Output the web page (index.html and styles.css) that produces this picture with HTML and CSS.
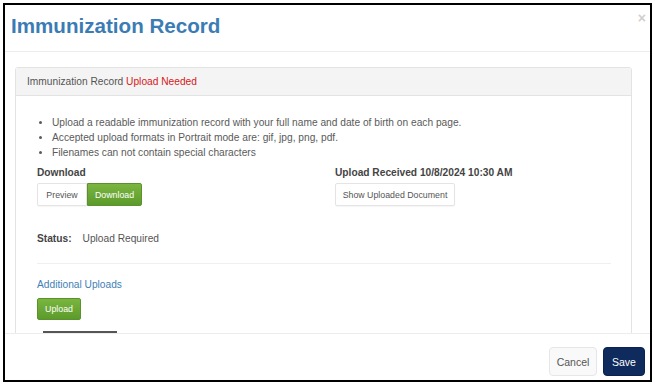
FILE: index.html
```html
<!DOCTYPE html>
<html>
<head>
<meta charset="utf-8">
<link rel="stylesheet" href="styles.css">
</head>
<body>
<div class="modal">
  <div class="modal-header">
    <h1 class="modal-title">Immunization Record</h1>
    <span class="close">&times;</span>
  </div>
  <div class="modal-body">
    <div class="panel">
      <div class="panel-heading">Immunization Record <span class="needed">Upload Needed</span></div>
      <div class="panel-body">
        <ul class="rules">
          <li>Upload a readable immunization record with your full name and date of birth on each page.</li>
          <li>Accepted upload formats in Portrait mode are: gif, jpg, png, pdf.</li>
          <li>Filenames can not contain special characters</li>
        </ul>
        <div class="cols">
          <div class="col">
            <div class="label">Download</div>
            <div class="btn-group">
              <button class="btn btn-default btn-left">Preview</button><button class="btn btn-green btn-right">Download</button>
            </div>
          </div>
          <div class="col">
            <div class="label">Upload Received 10/8/2024 10:30 AM</div>
            <button class="btn btn-default btn-show">Show Uploaded Document</button>
          </div>
        </div>
        <div class="status"><span class="status-key">Status:</span><span class="status-val">Upload Required</span></div>
        <div class="divider"></div>
        <div class="additional">Additional Uploads</div>
        <button class="btn btn-green btn-upload">Upload</button>
        <div class="more"></div>
      </div>
    </div>
  </div>
  <div class="modal-footer">
    <button class="fbtn fbtn-cancel">Cancel</button>
    <button class="fbtn fbtn-save">Save</button>
  </div>
</div>
</body>
</html>
```
FILE: styles.css
```css
* { box-sizing: border-box; }
body {
  margin: 0;
  background: #fff;
  font-family: "Liberation Sans", Arial, sans-serif;
  color: #555;
}
.modal {
  margin: 3px;
  width: 649px;
  height: 379px;
  border: 2px solid #000;
  display: flex;
  flex-direction: column;
  background: #fff;
}
.modal-header {
  position: relative;
  height: 47px;
  border-bottom: 1px solid #ececec;
  padding: 9px 0 0 6px;
}
.modal-title {
  margin: 0;
  font-size: 20.6px;
  line-height: 24px;
  font-weight: bold;
  color: #3b7cb4;
}
.close {
  position: absolute;
  top: 6px;
  right: 4px;
  font-size: 14px;
  font-weight: bold;
  color: #cfcfcf;
  line-height: 14px;
}
.modal-body {
  flex: 1;
  overflow: hidden;
  padding: 15px 18px 0 10px;
}
.panel {
  border: 1px solid #e3e3e3;
  border-radius: 3px;
}
.panel-heading {
  background: #f4f4f4;
  border-bottom: 1px solid #e3e3e3;
  padding: 6px 11px;
  font-size: 10.2px;
  line-height: 15px;
  color: #555;
}
.needed { color: #d42020; }
.panel-body {
  padding: 19px 20px 40px 21px;
  font-size: 10.2px;
  line-height: 15px;
}
.rules {
  margin: 0;
  padding-left: 15px;
  color: #5a5a5a;
}
.cols {
  display: grid;
  grid-template-columns: 298px 1fr;
  margin-top: 5px;
}
.label {
  font-weight: bold;
  color: #444;
  margin-bottom: 3px;
}
.btn {
  font-family: "Liberation Sans", Arial, sans-serif;
  font-size: 8.8px;
  height: 23px;
  padding: 0 8px;
  border-radius: 2px;
  cursor: pointer;
}
.btn-group { display: flex; }
.btn-default {
  background: #fff;
  border: 1px solid #e4e4e4;
  color: #555;
  box-shadow: 0 1px 1px rgba(0,0,0,0.04);
}
.btn-show { width: 120px; padding: 0; }
.btn-green {
  background: linear-gradient(#7ab63f, #5c9a2b);
  border: 1px solid #5b922d;
  color: #fff;
}
.btn-left { border-radius: 2px 0 0 2px; width: 50px; padding: 0; }
.btn-right { border-radius: 0 2px 2px 0; width: 55px; padding: 0; }
.status {
  margin-top: 25px;
}
.status-key {
  font-weight: bold;
  color: #444;
  margin-right: 11px;
}
.divider {
  border-top: 1px solid #efefef;
  margin: 17px 0 13px;
}
.additional {
  color: #3f7fb6;
}
.btn-upload {
  margin-top: 6px;
  height: 22px;
  width: 44px;
  padding: 0;
  display: block;
}
.more {
  margin: 11px 0 0 6px;
  width: 74px;
  height: 20px;
  border-top: 2px solid #555;
}
.modal-footer {
  height: 47px;
  border-top: 1px solid #ececec;
  padding: 13px 5px 0 0;
  display: flex;
  justify-content: flex-end;
  gap: 6px;
}
.fbtn {
  font-family: "Liberation Sans", Arial, sans-serif;
  font-size: 10.5px;
  height: 29px;
  border-radius: 4px;
  cursor: pointer;
}
.fbtn-cancel {
  width: 48px;
  background: #f9f9f9;
  border: 1px solid #e6e6e6;
  color: #555;
}
.fbtn-save {
  width: 42px;
  background: #0f2a5c;
  border: 1px solid #0b2250;
  color: #fff;
}
```
